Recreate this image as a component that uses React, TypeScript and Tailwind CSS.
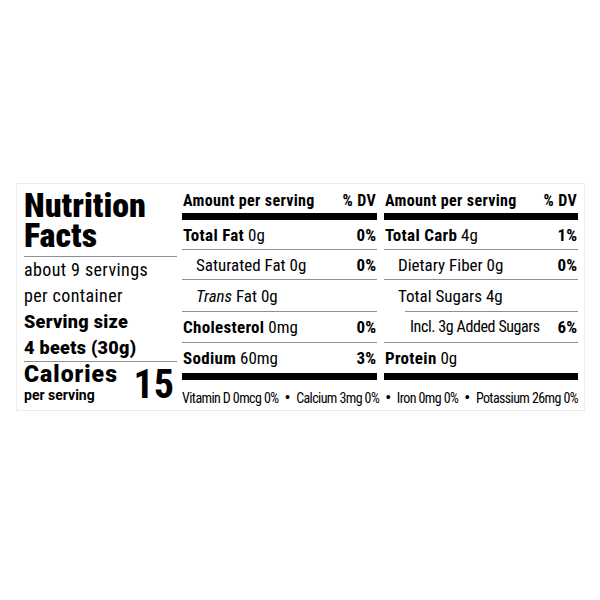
const font = "font-['Roboto_Condensed','Liberation_Sans',sans-serif]";
const wide = "font-['Roboto','Liberation_Sans',sans-serif]";

type Row = {
  label: string;
  bold?: boolean;
  italic?: string;
  amount: string;
  dv?: string;
  indent?: "none" | "one" | "two";
  h: string;
  line?: "full" | "indent" | "none";
};

const left: Row[] = [
  { label: "Total Fat", bold: true, amount: "0g", dv: "0%", h: "h-[30px]", line: "full" },
  { label: "Saturated Fat", amount: "0g", dv: "0%", indent: "one", h: "h-[30px]", line: "full" },
  { label: "Fat", italic: "Trans", amount: "0g", indent: "one", h: "h-[32px]", line: "full" },
  { label: "Cholesterol", bold: true, amount: "0mg", dv: "0%", h: "h-[31px]", line: "full" },
  { label: "Sodium", bold: true, amount: "60mg", dv: "3%", h: "h-[30px]", line: "none" },
];

const right: Row[] = [
  { label: "Total Carb", bold: true, amount: "4g", dv: "1%", h: "h-[30px]", line: "full" },
  { label: "Dietary Fiber", amount: "0g", dv: "0%", indent: "one", h: "h-[30px]", line: "full" },
  { label: "Total Sugars", amount: "4g", indent: "one", h: "h-[32px]", line: "indent" },
  { label: "Incl. 3g Added Sugars", amount: "", dv: "6%", indent: "two", h: "h-[31px]", line: "full" },
  { label: "Protein", bold: true, amount: "0g", h: "h-[30px]", line: "none" },
];

function NutrientRow({ row }: { row: Row }) {
  const pad = row.indent === "two" ? "pl-[26px]" : row.indent === "one" ? "pl-[14px]" : "pl-[1px]";
  return (
    <div className={`flex flex-col ${row.h}`}>
      <div className={`flex flex-1 items-center justify-between ${pad} pr-[1px] text-[17px] leading-[20px]`}>
        <span className={row.indent === "two" ? "text-[16px] tracking-[-0.4px]" : ""}>
          {row.italic && <i>{row.italic} </i>}
          {row.bold ? <b className="font-bold tracking-[0.3px]">{row.label}</b> : row.label}
          {row.amount && ` ${row.amount}`}
        </span>
        {row.dv && <b className="font-bold">{row.dv}</b>}
      </div>
      {row.line === "full" && <div className="h-px bg-[#8f8f8f]" />}
      {row.line === "indent" && <div className="ml-[21px] h-px bg-[#8f8f8f]" />}
    </div>
  );
}

function Column({ rows }: { rows: Row[] }) {
  return (
    <div className="flex flex-col">
      <div className="flex h-[29px] justify-between pt-[8px] text-[16px] font-bold leading-[18px] tracking-[0.35px]">
        <span className="pl-[1px]">Amount per serving</span>
        <span className="pr-[1px]">% DV</span>
      </div>
      <div className="h-[7px] bg-black" />
      {rows.map((r) => (
        <NutrientRow key={r.label} row={r} />
      ))}
      <div className="h-[7px] bg-black" />
    </div>
  );
}

export default function App() {
  return (
    <div className={`h-[600px] w-[600px] bg-white pl-4 pt-[183px] text-black ${font}`}>
      <div className="flex h-[228px] w-[569px] border border-[#ececec] pl-[7px] pr-[6px]">
        {/* Bloco da esquerda */}
        <div className="flex w-[153px] flex-col">
          <div className="h-[73px] border-b border-[#8f8f8f] pt-[6px] text-[34px] font-black leading-[30px]">
            <div>Nutrition</div>
            <div>Facts</div>
          </div>
          <div className="border-b border-[#8f8f8f] text-[18px] leading-[26px] tracking-[0.4px]">
            <div>about 9 servings</div>
            <div>per container</div>
            <div className={`${wide} font-black tracking-[0.3px]`}>Serving size</div>
            <div className={`${wide} font-black tracking-[0.3px]`}>4 beets (30g)</div>
          </div>
          <div className="flex items-start justify-between pt-[3px]">
            <div className={wide}>
              <div className="text-[23px] font-black leading-[20px] tracking-[1px]">Calories</div>
              <div className="mt-[2px] text-[14px] font-bold leading-[16px]">per serving</div>
            </div>
            <div className="pr-[3px] text-[40px] font-bold leading-[40px]">15</div>
          </div>
        </div>

        {/* Tabela */}
        <div className="ml-[5px] flex w-[396px] flex-col">
          <div className="grid grid-cols-[195px_194px] gap-x-[7px]">
            <Column rows={left} />
            <Column rows={right} />
          </div>
          <div className="flex items-center justify-between pt-[10px] text-[14px] leading-[16px] tracking-[-0.6px]">
            <span>Vitamin D 0mcg 0%</span>
            <span className="text-[18px]">•</span>
            <span>Calcium 3mg 0%</span>
            <span className="text-[18px]">•</span>
            <span>Iron 0mg 0%</span>
            <span className="text-[18px]">•</span>
            <span>Potassium 26mg 0%</span>
          </div>
        </div>
      </div>
    </div>
  );
}
